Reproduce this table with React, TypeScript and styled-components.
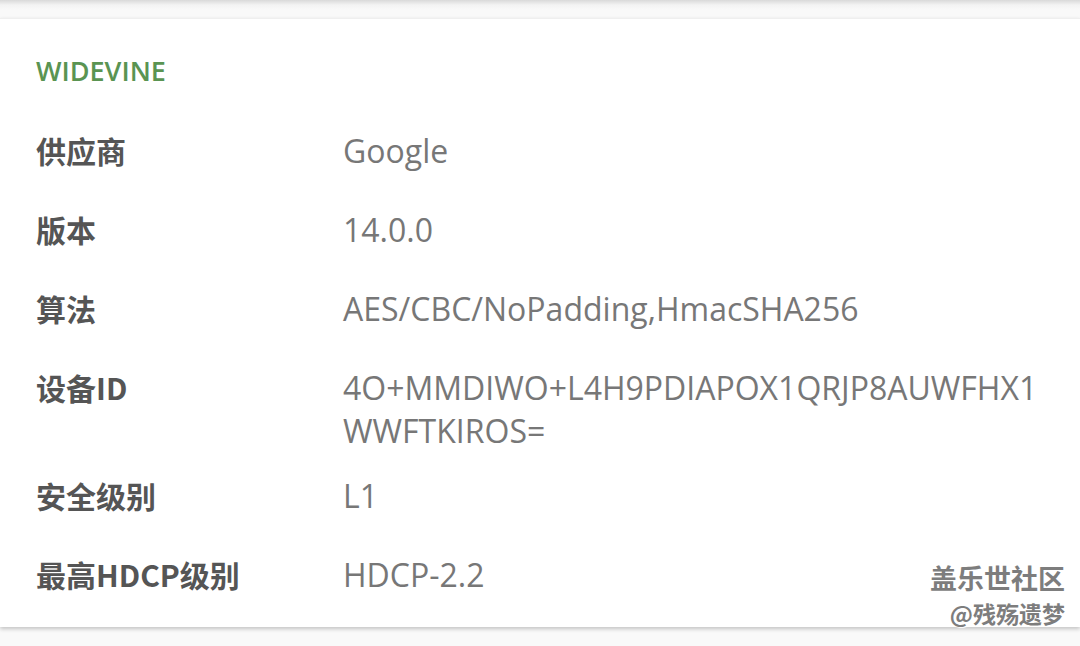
import styled, { createGlobalStyle } from "styled-components";

interface IRow {
  label: string;
  value: string;
}

const rows: IRow[] = [
  { label: "供应商", value: "Google" },
  { label: "版本", value: "14.0.0" },
  { label: "算法", value: "AES/CBC/NoPadding,HmacSHA256" },
  { label: "设备ID", value: "4O+MMDIWO+L4H9PDIAPOX1QRJP8AUWFHX1WWFTKIROS=" },
  { label: "安全级别", value: "L1" },
  { label: "最高HDCP级别", value: "HDCP-2.2" },
];

const GlobalStyle = createGlobalStyle`
  body {
    margin: 0;
    background: #f8f8f8;
    font-family: "Open Sans", "Noto Sans CJK SC", sans-serif;
  }
`;

const Page = styled.div`
  position: relative;
  width: 1080px;
  height: 646px;
  overflow: hidden;
  padding-top: 18px;
  box-sizing: border-box;
  background: linear-gradient(180deg, #d9d9d9 0, #f3f3f3 5px, #f9f9f9 10px);
`;

const Card = styled.div`
  height: 609px;
  box-sizing: border-box;
  background: #fff;
  padding: 34px 36px 0;
  border-top: 1px solid #efefef;
  box-shadow: 0 2px 4px rgba(0, 0, 0, 0.22);
`;

const Title = styled.h2`
  margin: 0 0 22px;
  font-size: 27px;
  font-weight: 600;
  line-height: 36px;
  color: #5a9452;
`;

const Row = styled.div`
  display: grid;
  grid-template-columns: 307px 1fr;
  align-items: start;
  min-height: 79px;
  padding: 18px 0 4px;
  box-sizing: border-box;
`;

const Label = styled.span`
  font-family: "Noto Sans CJK SC", sans-serif;
  font-size: 30px;
  font-weight: 700;
  line-height: 43px;
  color: #555;
`;

const Value = styled.span`
  font-size: 32px;
  line-height: 43px;
  color: #777;
  word-break: break-all;
`;

// 水印
const Watermark = styled.div`
  position: absolute;
  right: 15px;
  bottom: 18px;
  display: flex;
  flex-direction: column;
  align-items: flex-end;
  gap: 5px;
  font-family: "Noto Sans CJK SC", sans-serif;
  color: #7d7d7d;
  text-shadow: 1px 1px 1px #fff, -1px -1px 1px rgba(255, 255, 255, 0.8);
`;

const MarkTitle = styled.span<{ size: number }>`
  font-size: ${({ size }) => size}px;
  line-height: ${({ size }) => size + 6}px;
  font-weight: 700;
`;

export default function App() {
  return (
    <>
      <GlobalStyle />
      <Page>
        <Card>
          <Title>WIDEVINE</Title>
          {rows.map((row) => (
            <Row key={row.label}>
              <Label>{row.label}</Label>
              <Value>{row.value}</Value>
            </Row>
          ))}
        </Card>
        <Watermark>
          <MarkTitle size={27}>盖乐世社区</MarkTitle>
          <MarkTitle size={23}>@残殇遗梦</MarkTitle>
        </Watermark>
      </Page>
    </>
  );
}
